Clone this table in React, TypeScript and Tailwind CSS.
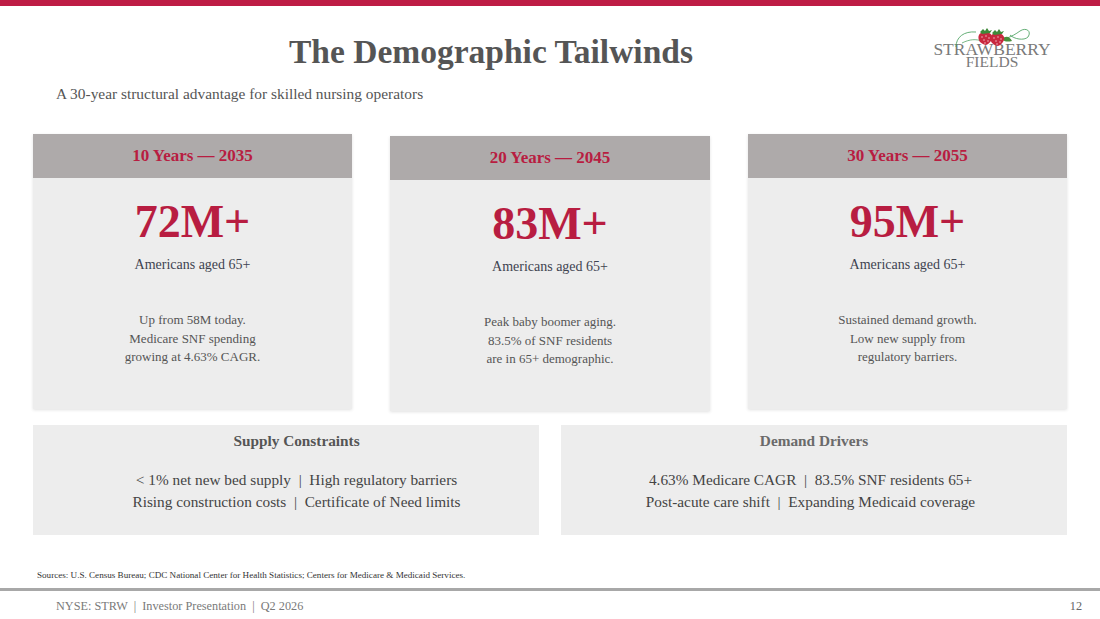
import React from "react";

const SERIF = "font-['Liberation_Serif','Times_New_Roman',serif]";

interface Horizon {
	label: string;
	value: string;
	lines: string[];
	offset?: boolean;
}

const horizons: Horizon[] = [
	{
		label: "10 Years — 2035",
		value: "72M+",
		lines: ["Up from 58M today.", "Medicare SNF spending", "growing at 4.63% CAGR."],
	},
	{
		label: "20 Years — 2045",
		value: "83M+",
		lines: ["Peak baby boomer aging.", "83.5% of SNF residents", "are in 65+ demographic."],
		offset: true,
	},
	{
		label: "30 Years — 2055",
		value: "95M+",
		lines: ["Sustained demand growth.", "Low new supply from", "regulatory barriers."],
	},
];

const drivers = [
	{
		title: "Supply Constraints",
		tone: "text-[#555555]",
		pad: "pl-[21px]",
		linePad: "",
		lines: [
			"< 1% net new bed supply  |  High regulatory barriers",
			"Rising construction costs  |  Certificate of Need limits",
		],
	},
	{
		title: "Demand Drivers",
		tone: "text-[#6a6a6a]",
		pad: "",
		linePad: "pr-[7px]",
		lines: [
			"4.63% Medicare CAGR  |  83.5% SNF residents 65+",
			"Post-acute care shift  |  Expanding Medicaid coverage",
		],
	},
];

function Strawberry({ x, y }: { x: number; y: number }) {
	return (
		<g transform={`translate(${x} ${y})`}>
			<path d="M0 2 C-7 2 -8 8 -5 12 C-3 14 0 15 1 15 C2 15 6 12 7 9 C8 6 6 2 0 2 Z" fill="#c8283e" />
			<path d="M-5 2 L-2 -1 L0 1 L2 -2 L4 1 L7 0 L5 3 L-3 4 Z" fill="#3f8a3a" />
			<circle cx="-3" cy="7" r="0.7" fill="#f6d0d6" />
			<circle cx="1" cy="6" r="0.7" fill="#f6d0d6" />
			<circle cx="4" cy="8" r="0.7" fill="#f6d0d6" />
			<circle cx="-1" cy="10" r="0.7" fill="#f6d0d6" />
			<circle cx="3" cy="11" r="0.7" fill="#f6d0d6" />
			<circle cx="0" cy="13" r="0.7" fill="#f6d0d6" />
		</g>
	);
}

function Logo() {
	return (
		<div className="relative flex w-[124px] flex-col items-center">
			<svg width="124" height="24" viewBox="0 0 124 24" className="absolute left-0 top-[-1px]">
				<path
					d="M26 20 C26 10 34 4 46 5 M62 13 C72 14 82 10 90 4 C96 0 102 4 98 10 C94 14 84 12 80 8"
					fill="none"
					stroke="#3f9a55"
					strokeWidth="0.8"
				/>
				<path d="M32 16 C40 12 46 12 52 14" fill="none" stroke="#3f9a55" strokeWidth="0.7" />
				<path d="M72 12 C76 8 80 10 82 14 C78 15 74 15 72 12 Z" fill="#4a8f3c" />
				<Strawberry x={55} y={3} />
				<Strawberry x={67} y={4} />
			</svg>
			<div className={`${SERIF} mt-[14px] whitespace-nowrap text-[17.5px] leading-[14px] text-[#7a7a7a]`}>
				STRAWBERRY
			</div>
			<div className={`${SERIF} text-[15.5px] leading-[12px] text-[#7a7a7a]`}>FIELDS</div>
		</div>
	);
}

function HorizonCard({ item }: { item: Horizon }) {
	return (
		<div
			className={`flex h-[275px] flex-col bg-[#ededed] shadow-[0_1px_3px_rgba(0,0,0,0.12)] ${item.offset ? "mt-[2px]" : ""}`}
		>
			<div className="flex h-[44px] items-center justify-center bg-[#aeaaaa]">
				<span className="text-[17px] font-bold text-[#b81d41]">{item.label}</span>
			</div>
			<div className="mt-[21px] text-center text-[46px] font-bold leading-[46px] text-[#b81d41]">
				{item.value}
			</div>
			<div className="mt-[11px] text-center text-[14px] leading-[18px] text-[#3e4350]">
				Americans aged 65+
			</div>
			<div className="mt-[37px] flex flex-col items-center text-[13px] leading-[18.5px] text-[#555555]">
				{item.lines.map((line) => (
					<span key={line}>{line}</span>
				))}
			</div>
		</div>
	);
}

export default function App() {
	return (
		<div className={`${SERIF} flex h-[619px] w-[1100px] flex-col overflow-hidden bg-white`}>
			<div className="h-[6px] bg-[#be1d45]" />

			<div className="flex h-[72px] items-start">
				<h1 className="ml-[289px] mt-[28px] whitespace-nowrap text-[33.5px] font-bold leading-[36px] text-[#555555]">
					The Demographic Tailwinds
				</h1>
				<div className="ml-auto mr-[46px] mt-[22px]">
					<Logo />
				</div>
			</div>

			<p className="ml-[56px] mt-[7px] text-[15.4px] leading-[18px] text-[#555555]">
				A 30-year structural advantage for skilled nursing operators
			</p>

			<div className="mt-[31px] grid grid-cols-[319px_320px_319px] gap-x-[38px] px-[33px]">
				{horizons.map((item) => (
					<HorizonCard key={item.label} item={item} />
				))}
			</div>

			<div className="mt-[14px] grid grid-cols-2 gap-x-[22px] px-[33px]">
				{drivers.map((d) => (
					<div key={d.title} className={`flex h-[110px] flex-col items-center bg-[#ededed] ${d.pad}`}>
						<div className={`mt-[7px] text-[15.3px] font-bold leading-[18px] ${d.tone}`}>{d.title}</div>
						<div
							className={`mt-[19px] flex flex-col items-center text-[15.3px] leading-[22px] text-[#444444] ${d.linePad}`}
						>
							{d.lines.map((line) => (
								<span key={line} className="whitespace-pre">
									{line}
								</span>
							))}
						</div>
					</div>
				))}
			</div>

			<p className="ml-[37px] mt-[34px] whitespace-nowrap text-[9.1px] leading-[12px] text-[#333333]">
				Sources: U.S. Census Bureau; CDC National Center for Health Statistics; Centers for Medicare &amp; Medicaid
				Services.
			</p>

			<div className="mt-[7px] h-[3px] bg-[#a8a8a8]" />

			<div className="flex items-center justify-between pl-[56px] pr-[18px] pt-[7px] text-[12.25px] leading-[16px]">
				<span className="whitespace-pre text-[#7a7a7a]">NYSE: STRW  |  Investor Presentation  |  Q2 2026</span>
				<span className="text-[#666666]">12</span>
			</div>
		</div>
	);
}
